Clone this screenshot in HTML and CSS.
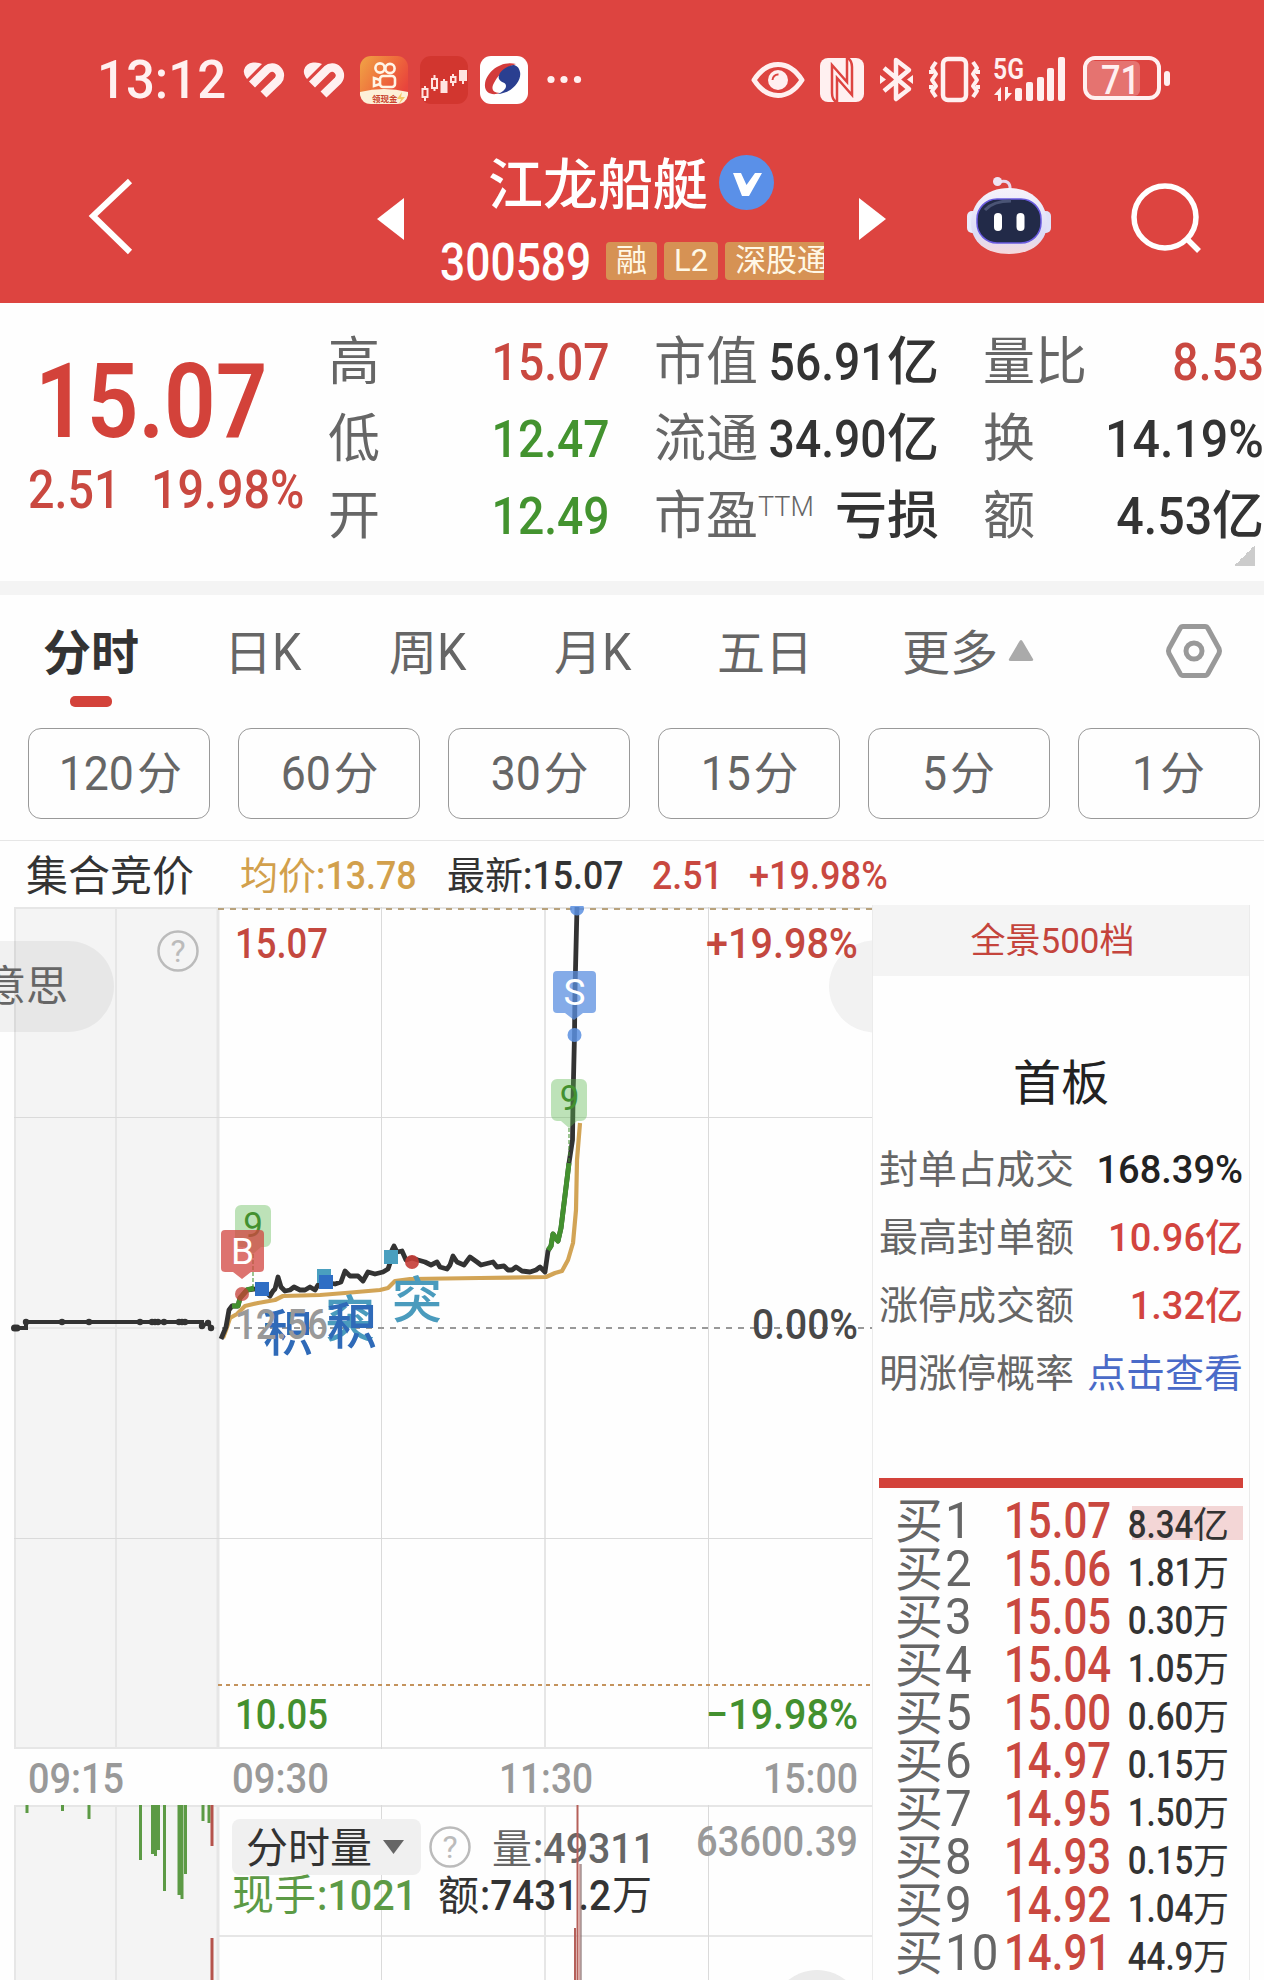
FILE: index.html
```html
<!DOCTYPE html>
<html lang="zh-CN">
<head>
  <meta charset="UTF-8" />
  <title>江龙船艇 300589</title>
  <link rel="stylesheet" href="styles.css">
</head>
<body>
  <header class="header">
    <div class="status">
      <div class="clock"><span class="num">13:12</span></div>
      <svg class="status-left" width="350" height="60" viewBox="240 50 350 60">
        <defs>
          <linearGradient id="ks" x1="0" y1="0" x2="1" y2="0.6">
            <stop offset="0" stop-color="#f0a545" />
            <stop offset="0.6" stop-color="#ee6a3c" />
            <stop offset="1" stop-color="#e8443c" />
          </linearGradient>
          <g id="heart">
            <path d="M247 79q-4-5-3-9 2-7 9-7.500 6-.5 9 1.500z" fill="#fff0f0" />
            <path d="M252 84.500L267 69.500a7.800 7.800 0 0 1 11 11L263.500 94.500" fill="none" stroke="#fff0f0" stroke-width="8.500" />
          </g>
        </defs>
        <use href="#heart" />
        <use href="#heart" x="60" />
        <rect x="360" y="56" width="48" height="48" rx="11" fill="url(#ks)" />
        <path d="M360 92q24-6 48 0v3q-2 9-11 9h-26q-9 0-11-9z" fill="#fdf0d8" />
        <g fill="none" stroke="#fff5e6" stroke-width="2.6">
          <circle cx="380" cy="68" r="4.6" />
          <circle cx="390" cy="68.500" r="4.600" />
          <rect x="380" y="76" width="15" height="11" rx="3" />
          <path d="M380 80l-6-2v8l6-2" />
        </g>
        <text x="372" y="102" class="cash">领现金</text>
        <path d="M402 92l-5 7h4l-2 5 6-7h-4z" fill="#f5c869" />
        <rect x="420" y="56" width="48" height="48" rx="11" fill="#d2362f" />
        <g stroke="#ffe3e0" stroke-width="2" fill="none">
          <path d="M425 86v3M425 97v4M434.500 75v4M434.500 88v3M444 79v3M453 74v3M453 83v3M463 80v4" />
          <rect x="422.500" y="89" width="5" height="8" />
          <rect x="432" y="79" width="5" height="9" />
          <rect x="441.500" y="82" width="5" height="10" fill="#ffe3e0" />
          <rect x="451" y="77" width="4.500" height="5" />
          <rect x="460" y="71" width="6" height="9" fill="#ffe3e0" />
        </g>
        <rect x="480" y="56" width="48" height="48" rx="11" fill="#fff" />
        <path d="M516 64c-16-4-30 9-31 20-1 9 7 12 15 9-8 0-9-5-6-10 4-8 12-16 22-19z" fill="#d33b3b" />
        <path d="M513 65c-9 2-16 9-14 14 2 4 7 3 7 7 0 3-4 7-9 8 14 0 25-13 23-22-1-5-4-7-7-7z" fill="#2a3f90" />
        <g fill="#fff0f0">
          <circle cx="551" cy="79.500" r="3.600" />
          <circle cx="564" cy="79.500" r="3.600" />
          <circle cx="577.500" cy="79.500" r="3.600" />
        </g>
      </svg>
      <svg class="status-right" width="430" height="60" viewBox="745 50 430 60">
        <path d="M754 80q10-15.500 24-15.500t24 15.500q-10 15.500-24 15.500t-24-15.500z" fill="none" stroke="#fff0f0" stroke-width="5" stroke-linejoin="round" />
        <circle cx="778" cy="80" r="10" fill="#fff0f0" />
        <path d="M772.500 80a5.500 5.500 0 0 1 6-5.500" fill="none" stroke="#dd4440" stroke-width="2" />
        <rect x="820" y="58" width="44" height="44" rx="8" fill="#fff0f0" />
        <path d="M847 58V82L832 65V93q0 6 4 9M837 102V78L852 95V67q0-6-4-9" fill="none" stroke="#dd4440" stroke-width="2.500" />
        <path d="M884 68l25 21-13 10V60l13 10-25 21" fill="none" stroke="#fff0f0" stroke-width="4.500" stroke-linejoin="round" />
        <path d="M880 75l6 4.500-6 4.500zM913 75l-6 4.500 6 4.500z" fill="#fff0f0" />
        <g fill="none" stroke="#fff0f0" stroke-width="4.500" stroke-linejoin="round">
          <rect x="943" y="59" width="23" height="41" rx="5" />
          <path d="M936 62l-4 6 4 6-4 6 4 6-4 5 4 6M931 70v4M931 85v4" stroke-width="4" />
          <path d="M973 62l4 6-4 6 4 6-4 6 4 5-4 6M978 70v4M978 85v4" stroke-width="4" />
        </g>
        <text x="993" y="79" class="net" textLength="31" lengthAdjust="spacingAndGlyphs">5G</text>
        <g fill="#fff0f0">
          <path d="M1001 87v14h-3V95h-4zM1005 87v14l7-8h-4v-6z" />
          <rect x="1015" y="88" width="7" height="13" rx="2" />
          <rect x="1026" y="82" width="7" height="19" rx="2" />
          <rect x="1037" y="77" width="7" height="24" rx="2" />
          <rect x="1047" y="68" width="7" height="33" rx="2" />
          <rect x="1058" y="57" width="7" height="44" rx="2" />
          <rect x="1164" y="71" width="6" height="15" rx="3" />
        </g>
        <rect x="1087" y="61" width="53" height="35" rx="6" fill="#e57370" />
        <rect x="1085" y="58" width="74" height="40" rx="10" fill="none" stroke="#fff0f0" stroke-width="4" />
        <text x="1101" y="94" class="battery" textLength="39" lengthAdjust="spacingAndGlyphs">71</text>
      </svg>
    </div>
    <nav class="nav">
      <svg class="back" width="60" height="90" viewBox="80 171 60 90">
        <path d="M130 181L93 216l37 36" fill="none" stroke="#fff" stroke-width="6" />
      </svg>
      <svg class="prev" width="40" height="50" viewBox="370 194 40 50"><path d="M404 198v42l-27-21z" fill="#fff" /></svg>
      <div class="stock">
        <div class="stock-name">
          <span>江龙船艇</span>
          <svg width="55" height="55" viewBox="0 0 55 55">
            <circle cx="27.500" cy="27.500" r="27.500" fill="#5a90e8" />
            <path d="M14 18h8l5.500 12L36 18h7L30 41h-7z" fill="#fff" />
          </svg>
        </div>
        <div class="stock-code">
          <span class="code"><span class="num">300589</span></span>
          <span class="tag">融</span>
          <span class="tag">L2</span>
          <span class="tag">深股通</span>
        </div>
      </div>
      <svg class="next" width="40" height="50" viewBox="850 194 40 50"><path d="M859 198v42l27-21z" fill="#fff" /></svg>
      <svg width="100" height="90" viewBox="960 171 100 90">
        <defs>
          <linearGradient id="shell" x1="0" y1="0" x2="0" y2="1">
            <stop offset="0" stop-color="#f6f3fb" />
            <stop offset="0.7" stop-color="#dcdcf6" />
            <stop offset="1" stop-color="#f6d8dc" />
          </linearGradient>
        </defs>
        <path d="M999 182q12-3 11 8" fill="none" stroke="#e8d8ee" stroke-width="3" />
        <circle cx="997.500" cy="181.500" r="4.500" fill="#efe4f3" />
        <rect x="967" y="211" width="12" height="22" rx="5" fill="#e9ecfb" />
        <rect x="1039" y="211" width="12" height="22" rx="5" fill="#e0e2f8" />
        <path d="M1009 188c24 0 38 16 38 35s-15 31-38 31-38-12-38-31 14-35 38-35z" fill="url(#shell)" />
        <rect x="977" y="199" width="64" height="44" rx="20" fill="#222a48" stroke="#6a5be0" stroke-width="1.500" />
        <path d="M985 210q8-9 26-9" fill="none" stroke="#4a5475" stroke-width="3" />
        <rect x="994" y="213" width="8" height="18" rx="4" fill="#fff" />
        <rect x="1016.500" y="213" width="8" height="18" rx="4" fill="#fff" />
      </svg>
      <svg width="80" height="90" viewBox="1125 171 80 90">
        <circle cx="1165" cy="217" r="31" fill="none" stroke="#fff" stroke-width="5.500" />
        <path d="M1187 239l12 12" stroke="#fff" stroke-width="5.500" />
      </svg>
    </nav>
  </header>

  <section class="quote">
    <div class="price-box">
      <div class="price red"><span class="num">15.07</span></div>
      <div class="change red">
        <span class="num">2.51</span>
        <span class="num">19.98%</span>
      </div>
    </div>
    <div class="metrics">
      <div class="metric"><span>高</span><b class="red"><i class="num">15.07</i></b></div>
      <div class="metric"><span>市值</span><b><i class="num">56.91</i>亿</b></div>
      <div class="metric"><span>量比</span><b class="red"><i class="num">8.53</i></b></div>
      <div class="metric"><span>低</span><b class="green"><i class="num">12.47</i></b></div>
      <div class="metric"><span>流通</span><b><i class="num">34.90</i>亿</b></div>
      <div class="metric"><span>换</span><b><i class="num wide">14.19%</i></b></div>
      <div class="metric"><span>开</span><b class="green"><i class="num">12.49</i></b></div>
      <div class="metric"><span>市盈<em>TTM</em></span><b>亏损</b></div>
      <div class="metric"><span>额</span><b><i class="num wide">4.53</i>亿</b></div>
    </div>
    <div class="corner"></div>
  </section>

  <div class="tabs">
    <span class="tab active">分时</span>
    <span class="tab">日<i class="num">K</i></span>
    <span class="tab">周<i class="num">K</i></span>
    <span class="tab">月<i class="num">K</i></span>
    <span class="tab">五日</span>
    <span class="tab more">更多<svg width="28" height="24" viewBox="0 0 28 24"><path d="M14 1q1 0 2 2l10 17q1 2-2 2H4q-3 0-2-2L12 3q1-2 2-2z" fill="#aaa" /></svg></span>
    <svg class="settings" width="58" height="56" viewBox="0 0 58 56">
      <path d="M18 3.500h22q2 0 3 2l11 20q1 2.500 0 5l-11 20q-1 2-3 2H18q-2 0-3-2L4 30.500q-1-2.500 0-5l11-20q1-2 3-2z" fill="none" stroke="#999" stroke-width="5" />
      <circle cx="29" cy="28" r="8" fill="none" stroke="#999" stroke-width="5" />
    </svg>
  </div>

  <div class="periods">
    <span class="period"><i class="num">120</i>分</span>
    <span class="period"><i class="num">60</i>分</span>
    <span class="period"><i class="num">30</i>分</span>
    <span class="period"><i class="num">15</i>分</span>
    <span class="period"><i class="num">5</i>分</span>
    <span class="period"><i class="num">1</i>分</span>
  </div>

  <div class="info">
    <span class="auction">集合竞价</span>
    <span class="gold">均价<i class="num">:13.78</i></span>
    <span>最新<i class="num">:15.07</i></span>
    <span class="red"><i class="num">2.51</i></span>
    <span class="red"><i class="num wide">+19.98%</i></span>
  </div>

  <main class="main">
    <svg class="chart" width="872" height="1075" viewBox="0 905 872 1075">
      <!-- call auction background -->
      <rect x="14" y="907" width="205" height="842" fill="#f4f4f4" />
      <rect x="14" y="1805" width="205" height="175" fill="#f4f4f4" />

      <!-- grid -->
      <g stroke="#e6e6e6" stroke-width="2">
        <path d="M14 908H872M14 1748H872M14 1806H872M218 1936H872M15 1328H218" />
        <path d="M15 907V1749M116 907V1749M545 907V1749M15 1805V1980M116 1805V1980M545 1805V1980" />
        <path d="M218 907V1749M218 1805V1980" stroke-width="3" />
      </g>
      <path d="M14 1117.500H872M14 1538.500H872M381.500 907V1749M708.500 907V1749M381.500 1805V1980M708.500 1805V1980" stroke="#dadada" />
      <path d="M218 909H872" stroke="#b8a27c" stroke-width="2" stroke-dasharray="6 6" />
      <path d="M218 1685H872" stroke="#c4935c" stroke-width="2" stroke-dasharray="4 4" />
      <path d="M222 1328H872" stroke="#999" stroke-width="2" stroke-dasharray="6 6" />

      <!-- floating buttons -->
      <circle cx="875" cy="986.500" r="46" fill="#f2f2f2" />
      <path d="M0 941H68.500a45.500 45.500 0 0 1 0 91H0z" fill="#000" fill-opacity="0.05" />
      <text x="-16" y="1001" class="cn" font-size="42" fill="#666">意思</text>
      <g>
        <circle cx="178" cy="951" r="19.500" fill="none" stroke="#bbb" stroke-width="2.500" />
        <text x="178" y="962" class="help">?</text>
      </g>

      <!-- auction line -->
      <path d="M14 1328H26V1322H202V1326L208 1323L211 1328" fill="none" stroke="#333" stroke-width="4" />
      <g fill="#333">
        <circle cx="14.500" cy="1328" r="3.500" /><circle cx="17" cy="1328" r="3.500" />
        <circle cx="26" cy="1322" r="3.200" /><circle cx="62" cy="1322" r="3.200" />
        <circle cx="89" cy="1322" r="3.200" /><circle cx="140" cy="1322" r="3.200" />
        <circle cx="152" cy="1322" r="3.200" /><circle cx="155" cy="1322" r="3.200" />
        <circle cx="158" cy="1322" r="3.200" /><circle cx="164" cy="1322" r="3.200" />
        <circle cx="179" cy="1322" r="3.200" /><circle cx="182" cy="1322" r="3.200" />
        <circle cx="185" cy="1322" r="3.200" /><circle cx="202" cy="1326" r="3.200" />
        <circle cx="208" cy="1323" r="3.200" /><circle cx="211" cy="1328" r="3.200" />
      </g>

      <!-- average and price -->
      <g fill="none" stroke-width="4.200" stroke-linejoin="round">
        <path stroke="#d2a456" d="M223 1338L226 1330L230 1318L237 1314L245 1306L258 1303L275 1300L283 1296L320 1295L345 1293L380 1290L388 1288L395 1281L410 1279L480 1278L546 1277L555 1273L562 1271L568 1260L573 1243L576 1210L577 1160L580 1123" />
        <path stroke="#333" stroke-width="4.800" d="M221 1339L226 1327L229 1310L232 1306L238 1306L240 1298L247 1290L262 1288L270 1296L273 1291L275 1289L278 1277L281 1287L285 1291L290 1290L294 1287L300 1290L305 1290L310 1287L315 1290L318 1285L325 1282L335 1284L341 1282L345 1271L350 1276L358 1276L363 1281L368 1272L375 1274L383 1272L388 1269L391 1260L392 1250L394 1246L397 1252L402 1251L406 1260L412 1258L418 1260L425 1262L431 1265L437 1262L440 1267L447 1269L450 1265L453 1256L457 1262L464 1265L470 1257L477 1262L481 1265L493 1262L497 1267L504 1266L508 1270L512 1270L516 1267L522 1271L530 1272L536 1270L540 1267L545 1272L548 1251L551 1246L553 1234L558 1241L561 1228L569 1163L572.500 1140L573 1100L574.500 1035L575 990L577 907" />
        <path stroke="#43902f" stroke-width="5" d="M232 1306L238 1306L240 1298L247 1290L254 1288M548 1250L551 1246L553 1234L558 1241L561 1228L569 1163" />
      </g>

      <!-- signal points -->
      <circle cx="242" cy="1294" r="7" fill="#c43c36" fill-opacity="0.750" />
      <circle cx="412" cy="1262" r="7" fill="#c43c36" fill-opacity="0.900" />
      <rect x="255" y="1282" width="14" height="14" fill="#2f6ec4" />
      <rect x="317" y="1269" width="14" height="14" fill="#4a9fbf" />
      <rect x="319" y="1275" width="14" height="14" fill="#2f6ec4" />
      <rect x="384" y="1250" width="14" height="14" fill="#4a9fbf" />
      <circle cx="574.500" cy="1035" r="7" fill="#5b8fe0" fill-opacity="0.850" />
      <path d="M570.500 906h13a7 7 0 1 1-13 0z" fill="#5b8fe0" fill-opacity="0.850" />

      <g stroke="#43902f" stroke-dasharray="4 2" stroke-opacity="0.700" stroke-width="1.500">
        <path d="M253 1254V1288M569 1128V1163" />
      </g>
      <path d="M241 1205h24a6 6 0 0 1 6 6v30a6 6 0 0 1-6 6h-4l-8 7-8-7h-4a6 6 0 0 1-6-6v-30a6 6 0 0 1 6-6z" fill="#5cb851" fill-opacity="0.400" />
      <text x="253" y="1237" class="mark nine">9</text>
      <path d="M225 1230h35a4 4 0 0 1 4 4v34a4 4 0 0 1-4 4h-9l-9 7-9-7h-8a4 4 0 0 1-4-4v-34a4 4 0 0 1 4-4z" fill="#d2443f" fill-opacity="0.750" />
      <text x="242.500" y="1264" class="mark">B</text>
      <path d="M557 971h35a4 4 0 0 1 4 4v34a4 4 0 0 1-4 4h-9l-9 7-9-7h-8a4 4 0 0 1-4-4v-34a4 4 0 0 1 4-4z" fill="#5b8fe0" fill-opacity="0.750" />
      <text x="574.500" y="1005" class="mark">S</text>
      <path d="M557 1079h24a6 6 0 0 1 6 6v30a6 6 0 0 1-6 6h-4l-8 7-8-7h-4a6 6 0 0 1-6-6v-30a6 6 0 0 1 6-6z" fill="#5cb851" fill-opacity="0.400" />
      <text x="569.500" y="1110" class="mark nine">9</text>

      <g class="cn signal" font-size="50">
        <text x="263" y="1351" fill="#2f6ab8">积</text>
        <text x="325" y="1337" fill="#4a9bbd">突</text>
        <text x="327" y="1344" fill="#2f6ab8">积</text>
        <text x="392" y="1318" fill="#4a9bbd">突</text>
      </g>

      <!-- axis labels -->
      <g class="axis">
        <text x="235" y="1339" textLength="93" lengthAdjust="spacingAndGlyphs" fill="#999">12.56</text>
        <text x="235" y="958" textLength="93" lengthAdjust="spacingAndGlyphs" fill="#c4483f">15.07</text>
        <text x="706" y="958" textLength="152" lengthAdjust="spacingAndGlyphs" fill="#c4483f">+19.98%</text>
        <text x="752" y="1339" textLength="106" lengthAdjust="spacingAndGlyphs" fill="#484848">0.00%</text>
        <text x="235" y="1729" textLength="93" lengthAdjust="spacingAndGlyphs" fill="#43902f">10.05</text>
        <text x="706" y="1729" textLength="152" lengthAdjust="spacingAndGlyphs" fill="#43902f">−19.98%</text>
        <g fill="#999">
          <text x="28" y="1793" textLength="96" lengthAdjust="spacingAndGlyphs">09:15</text>
          <text x="232" y="1793" textLength="97" lengthAdjust="spacingAndGlyphs">09:30</text>
          <text x="499" y="1793" textLength="94" lengthAdjust="spacingAndGlyphs">11:30</text>
          <text x="763" y="1793" textLength="95" lengthAdjust="spacingAndGlyphs">15:00</text>
          <text x="696" y="1856" textLength="162" lengthAdjust="spacingAndGlyphs">63600.39</text>
        </g>
      </g>

      <!-- volume -->
      <g stroke="#5c9a45" stroke-width="3">
        <path d="M27 1805V1813M62.500 1805V1811M89 1805V1819M140.500 1805V1860M152.500 1805V1854M155.500 1805V1856M158.500 1805V1850M164.500 1805V1891M179 1805V1895M182 1805V1899M185.500 1805V1874M203 1805V1821M209 1805V1823" />
        <path d="M212 1805V1846M212 1938V1980" stroke="#b5534c" />
      </g>
      <path d="M232 1827a8 8 0 0 1 8-8h173a8 8 0 0 1 8 8v40a8 8 0 0 1-8 8H240a8 8 0 0 1-8-8z" fill="#f0f0f0" />
      <text x="246" y="1863" class="cn" font-size="42" fill="#333">分时量</text>
      <path d="M383 1840h21l-10.500 14z" fill="#666" />
      <circle cx="450" cy="1847" r="19.500" fill="none" stroke="#bbb" stroke-width="2.500" />
      <text x="450" y="1858" class="help">?</text>
      <text x="492" y="1863" class="cn" font-size="40" fill="#666">量</text>
      <text x="232" y="1910" class="cn" font-size="42" fill="#5c9a45">现手</text>
      <text x="438" y="1910" class="cn" font-size="41" fill="#333">额</text>
      <text x="612" y="1909" class="cn" font-size="40" fill="#333">万</text>
      <g class="axis">
        <text x="533" y="1863" textLength="122" lengthAdjust="spacingAndGlyphs" fill="#666">:49311</text>
        <text x="317" y="1910" textLength="100" lengthAdjust="spacingAndGlyphs" fill="#5c9a45">:1021</text>
        <text x="480" y="1910" textLength="131" lengthAdjust="spacingAndGlyphs" fill="#333">:7431.2</text>
      </g>
      <path d="M577.500 1805V1980M575 1928V1980" stroke="#b5605a" stroke-width="2" />
      <path d="M579.500 1864V1980" stroke="#d9a6a3" stroke-width="2" />
      <path d="M581 1864V1980" stroke="#775c5c" />
      <circle cx="817" cy="2016" r="46" fill="#ebebeb" />
    </svg>

    <aside class="side">
      <div class="side-head">全景500档</div>
      <div class="side-title">首板</div>
      <dl class="facts">
        <dt>封单占成交</dt><dd>168.39%</dd>
        <dt>最高封单额</dt><dd class="bright">10.96亿</dd>
        <dt>涨停成交额</dt><dd class="bright">1.32亿</dd>
        <dt>明涨停概率</dt><dd class="link">点击查看</dd>
      </dl>
      <div class="bar"></div>
      <ul class="orders">
        <li><span>买<i class="num">1</i></span><b><i class="num">15.07</i></b><em class="top"><i class="num">8.34</i>亿</em></li>
        <li><span>买<i class="num">2</i></span><b><i class="num">15.06</i></b><em><i class="num">1.81</i>万</em></li>
        <li><span>买<i class="num">3</i></span><b><i class="num">15.05</i></b><em><i class="num">0.30</i>万</em></li>
        <li><span>买<i class="num">4</i></span><b><i class="num">15.04</i></b><em><i class="num">1.05</i>万</em></li>
        <li><span>买<i class="num">5</i></span><b><i class="num">15.00</i></b><em><i class="num">0.60</i>万</em></li>
        <li><span>买<i class="num">6</i></span><b><i class="num">14.97</i></b><em><i class="num">0.15</i>万</em></li>
        <li><span>买<i class="num">7</i></span><b><i class="num">14.95</i></b><em><i class="num">1.50</i>万</em></li>
        <li><span>买<i class="num">8</i></span><b><i class="num">14.93</i></b><em><i class="num">0.15</i>万</em></li>
        <li><span>买<i class="num">9</i></span><b><i class="num">14.92</i></b><em><i class="num">1.04</i>万</em></li>
        <li><span>买<i class="num">10</i></span><b><i class="num">14.91</i></b><em><i class="num">44.9</i>万</em></li>
      </ul>
    </aside>
  </main>
</body>
</html>
```
FILE: styles.css
```css
* {
  box-sizing: border-box;
}

body {
  margin: 0;
  width: 1264px;
  height: 1980px;
  overflow: hidden;
  background: #fefefe;
  color: #333;
  font-family: Roboto, "Noto Sans CJK SC", sans-serif;
  white-space: nowrap;
}

i,
em {
  font-style: normal;
}

b {
  font-weight: 500;
}

svg {
  display: block;
}

/* condensed figures */
.num {
  display: inline-block;
  transform: scaleX(0.87);
  transform-origin: left;
}

.red {
  color: #c94840;
}

.green {
  color: #43932f;
}

.gold {
  color: #d2a04c;
}

/* header */
.header {
  height: 303px;
  background: #dd4440;
  color: #fff;
}

.status {
  display: flex;
  align-items: center;
  height: 140px;
  padding: 20px 0 0 97px;
}

.clock {
  width: 143px;
  font-size: 53px;
  font-weight: 500;
  color: #fff0f0;
}

.clock .num {
  transform: scaleX(0.96);
}

.status-right {
  margin-left: 155px;
}

.cash {
  font: 700 8.500px "Noto Sans CJK SC", sans-serif;
  fill: #c8432e;
}

.net {
  font: 600 30px Roboto, sans-serif;
  fill: #fff0f0;
}

.battery {
  font: 500 41px Roboto, sans-serif;
  fill: #fff0f0;
}

.nav {
  display: grid;
  grid-template-columns: 370px 71px 383px 136px 165px 139px;
  grid-template-rows: 152px;
  align-items: center;
  height: 152px;
}

.back {
  margin-left: 80px;
}

.prev,
.next {
  margin-top: 6px;
}

.next {
  margin-left: 26px;
}

.stock {
  align-self: start;
  padding-top: 7px;
}

.stock-name {
  display: flex;
  align-items: center;
  gap: 11px;
  height: 76px;
  padding-left: 47px;
  font-size: 55px;
  font-weight: 500;
  line-height: 76px;
}

.stock-name svg {
  margin-top: -5px;
}

.stock-code {
  display: flex;
  align-items: center;
  gap: 7px;
  height: 79px;
  overflow: hidden;
}

.code {
  width: 159px;
  margin-left: -1px;
  font-size: 51px;
  font-weight: 500;
}

.tag {
  flex: none;
  height: 38px;
  margin-top: -3px;
  padding: 0 10px;
  border-radius: 4px;
  background: #d69254;
  color: #fff8e6;
  font-size: 31px;
  line-height: 38px;
}

/* quote */
.quote {
  position: relative;
  display: flex;
  height: 292px;
  border-bottom: 14px solid #f4f4f4;
}

.price-box {
  width: 328px;
  padding-top: 44px;
}

.price {
  padding-left: 35px;
  font-size: 104px;
  font-weight: 600;
  line-height: 110px;
  color: #d3423a;
}

.change {
  display: flex;
  gap: 18px;
  padding-left: 28px;
  font-size: 53px;
  font-weight: 500;
  line-height: 67px;
}

.change .num {
  transform: scaleX(0.88);
}

.metrics {
  display: grid;
  grid-template-columns: 282px 285px 281px;
  grid-auto-rows: 77px;
  column-gap: 44px;
  padding-top: 21px;
}

.metric {
  display: flex;
  justify-content: space-between;
  font-size: 52px;
  line-height: 77px;
}

.metric span {
  color: #666;
}

.metric .num {
  margin-left: -14px;
  transform: scaleX(0.89);
  transform-origin: right;
}

.metric .wide {
  transform: scaleX(0.93);
}

.metric em {
  font-size: 27px;
  font-weight: 300;
  vertical-align: 18px;
  line-height: 1;
}

.corner {
  position: absolute;
  right: 9px;
  bottom: 15px;
  width: 21px;
  height: 21px;
  background: linear-gradient(135deg, transparent 50%, #ccc 50%);
}

/* tabs */
.tabs {
  display: grid;
  grid-template-columns: 181px 165px 165px 163px 185px 263px auto;
  align-items: center;
  height: 117px;
  padding-left: 43px;
  font-size: 48px;
  line-height: 117px;
  color: #666;
}

.tab {
  position: relative;
}

.tab .num {
  font-size: 51px;
  line-height: 1;
  transform: scaleX(0.92);
}

.tab.active {
  font-weight: 700;
  color: #333;
}

.tab.active::after {
  content: "";
  position: absolute;
  left: 27px;
  bottom: 5px;
  width: 42px;
  height: 11px;
  border-radius: 5px;
  background: #d3423a;
}

.more {
  display: flex;
  align-items: center;
  gap: 9px;
}

.more svg,
.settings {
  margin-top: -5px;
}

/* periods */
.periods {
  display: flex;
  gap: 28px;
  padding: 16px 0 21px 28px;
  border-bottom: 1px solid #e6e6e6;
}

.period {
  flex: none;
  width: 182px;
  height: 91px;
  border: 1px solid #999;
  border-radius: 13px;
  text-align: center;
  font-size: 45px;
  line-height: 92px;
  color: #666;
}

.period .num {
  font-size: 48px;
  line-height: 1;
  transform: translateX(-3px) scaleX(0.93);
  transform-origin: right;
}

/* info line */
.info {
  display: grid;
  grid-template-columns: 214px 207px 205px 97px auto;
  height: 64px;
  padding-left: 26px;
  font-size: 38px;
  line-height: 71px;
}

.info .auction {
  font-size: 42px;
}

.info .num {
  font-weight: 500;
  transform: scaleX(0.94);
}

.info .wide {
  transform: scaleX(0.95);
}

/* chart */
.main {
  display: flex;
}

.chart {
  flex: none;
}

.cn {
  font-family: "Noto Sans CJK SC", sans-serif;
}

.signal {
  font-weight: 500;
}

.axis {
  font-size: 42px;
  font-weight: 500;
}

.help {
  font-size: 32px;
  fill: #bbb;
  text-anchor: middle;
}

.mark {
  font-size: 37px;
  fill: #fff;
  text-anchor: middle;
}

.nine {
  font-size: 35px;
  fill: #43902f;
}

/* side panel */
.side {
  width: 378px;
  height: 1075px;
  border: solid #ebebeb;
  border-width: 0 1px;
}

.side-head {
  height: 71px;
  padding-right: 17px;
  background: #f4f4f4;
  color: #c4443c;
  font-size: 35px;
  line-height: 73px;
  text-align: center;
}

.side-title {
  margin-top: 60px;
  color: #222;
  font-size: 48px;
  line-height: 96px;
  text-align: center;
}

.facts {
  display: grid;
  grid-template-columns: auto auto;
  justify-content: space-between;
  margin: 4px 0 0;
  padding: 0 6px 0 6px;
  font-size: 39px;
  line-height: 68px;
}

.facts dt {
  color: #666;
}

.facts dd {
  margin: 0;
  font-size: 38px;
  font-weight: 500;
  color: #222;
  text-align: right;
}

.facts .bright {
  color: #d2443f;
}

.facts .link {
  font-size: 39px;
  font-weight: 400;
  color: #4a6bc8;
}

.bar {
  height: 10px;
  margin: 70px 6px 8px;
  background: #d3423a;
}

.orders {
  margin: 0;
  padding: 0 6px 0 22px;
  list-style: none;
}

.orders li {
  display: grid;
  grid-template-columns: 109px 106px 1fr;
  align-items: baseline;
  height: 48px;
  font-size: 50px;
  line-height: 48px;
}

.orders span {
  font-size: 48px;
  color: #666;
}

.orders span .num {
  font-size: 50px;
  line-height: 1;
  transform: translateX(2px) scaleX(0.95);
}

.orders b {
  color: #c94840;
}

.orders b .num {
  transform: scaleX(0.84);
}

.orders em {
  margin-top: -1px;
  padding-right: 14px;
  font-size: 36px;
  line-height: 34px;
  text-align: right;
}

.orders em .num {
  font-size: 38px;
  font-weight: 500;
  line-height: 1;
  transform-origin: right;
}

.orders .top {
  background: linear-gradient(#f3d6d6, #f3d6d6) right top / 111px 34px no-repeat;
}
```
